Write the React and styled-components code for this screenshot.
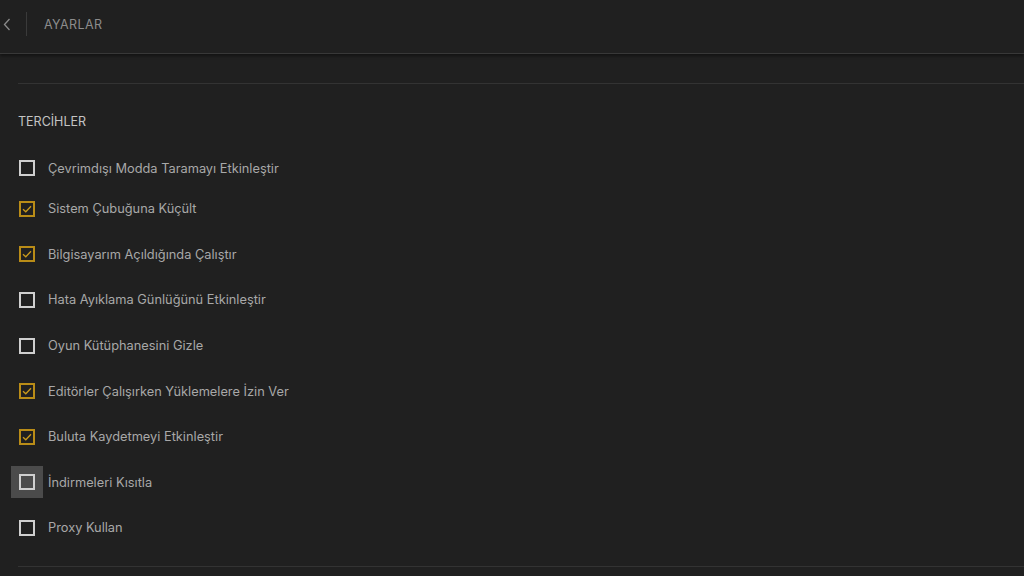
import styled, { createGlobalStyle } from "styled-components"

const items = [
  { label: "Çevrimdışı Modda Taramayı Etkinleştir", checked: false },
  { label: "Sistem Çubuğuna Küçült", checked: true },
  { label: "Bilgisayarım Açıldığında Çalıştır", checked: true },
  { label: "Hata Ayıklama Günlüğünü Etkinleştir", checked: false },
  { label: "Oyun Kütüphanesini Gizle", checked: false },
  { label: "Editörler Çalışırken Yüklemelere İzin Ver", checked: true },
  { label: "Buluta Kaydetmeyi Etkinleştir", checked: true },
  { label: "İndirmeleri Kısıtla", checked: false, hover: true },
  { label: "Proxy Kullan", checked: false },
]

const GlobalStyle = createGlobalStyle`
  html, body {
    margin: 0;
    padding: 0;
    background: #202020;
    font-family: Inter, "Noto Sans", sans-serif;
  }
  * {
    box-sizing: border-box;
  }
`

const Check = () => (
  <svg width="10" height="8" viewBox="0 0 10 8" fill="none">
    <path d="M1 4.2 L3.8 6.8 L9 1.2" stroke="#c99a1c" strokeWidth="1.3" />
  </svg>
)

const App = () => {
  return (
    <Page>
      <GlobalStyle />
      <Header>
        <BackButton>
          <svg width="8" height="13" viewBox="0 0 8 13" fill="none">
            <path d="M6.5 1 L1.5 6.5 L6.5 12" stroke="#8a8a8a" strokeWidth="1.3" />
          </svg>
        </BackButton>
        <Separator />
        <Title>AYARLAR</Title>
      </Header>
      <Content>
        <Divider />
        <SectionTitle>TERCİHLER</SectionTitle>
        <List>
          {items.map((item) => (
            <Row key={item.label}>
              <BoxWrap $hover={item.hover}>
                <Box $checked={item.checked}>{item.checked && <Check />}</Box>
              </BoxWrap>
              <Label>{item.label}</Label>
            </Row>
          ))}
        </List>
        <Divider />
      </Content>
    </Page>
  )
}

const Page = styled.div`
  width: 1024px;
  height: 576px;
  overflow: hidden;
  background: #202020;
`

const Header = styled.header`
  height: 54px;
  display: flex;
  align-items: center;
  padding-bottom: 5px;
  border-bottom: 1px solid #383838;
  box-shadow: 0 2px 3px rgba(0, 0, 0, 0.45);
`

const BackButton = styled.button`
  background: none;
  border: none;
  padding: 0 0 0 3px;
  width: 26px;
  display: flex;
  align-items: center;
  cursor: pointer;
`

const Separator = styled.div`
  width: 1px;
  height: 24px;
  background: #3a3a3a;
`

const Title = styled.h1`
  margin: 0 0 0 17px;
  font-size: 12.5px;
  font-weight: 400;
  letter-spacing: 0.4px;
  color: #8c8c8c;
`

const Content = styled.main`
  padding: 29px 0 0 18px;
`

const Divider = styled.div`
  height: 1px;
  background: #333333;
`

const SectionTitle = styled.h2`
  margin: 30px 0 0;
  font-size: 12.5px;
  font-weight: 400;
  letter-spacing: 0;
  color: #c4c4c4;
  line-height: 16px;
`

const List = styled.div`
  display: flex;
  flex-direction: column;
  margin: 20px 0 15px;
`

const Row = styled.label`
  display: flex;
  align-items: center;
  height: 45.6px;
  &:first-child {
    height: 36px;
  }
`

const BoxWrap = styled.span`
  width: 32px;
  height: 32px;
  margin-left: -7px;
  display: flex;
  align-items: center;
  justify-content: center;
  background: ${(p) => (p.$hover ? "#4b4b4b" : "transparent")};
`

const Box = styled.span`
  width: 16px;
  height: 16px;
  border: 2px solid ${(p) => (p.$checked ? "#b98c17" : "#cfcfcf")};
  display: flex;
  align-items: center;
  justify-content: center;
`

const Label = styled.span`
  margin-left: 5px;
  font-size: 12.8px;
  color: #a8a8a8;
`

export default App
